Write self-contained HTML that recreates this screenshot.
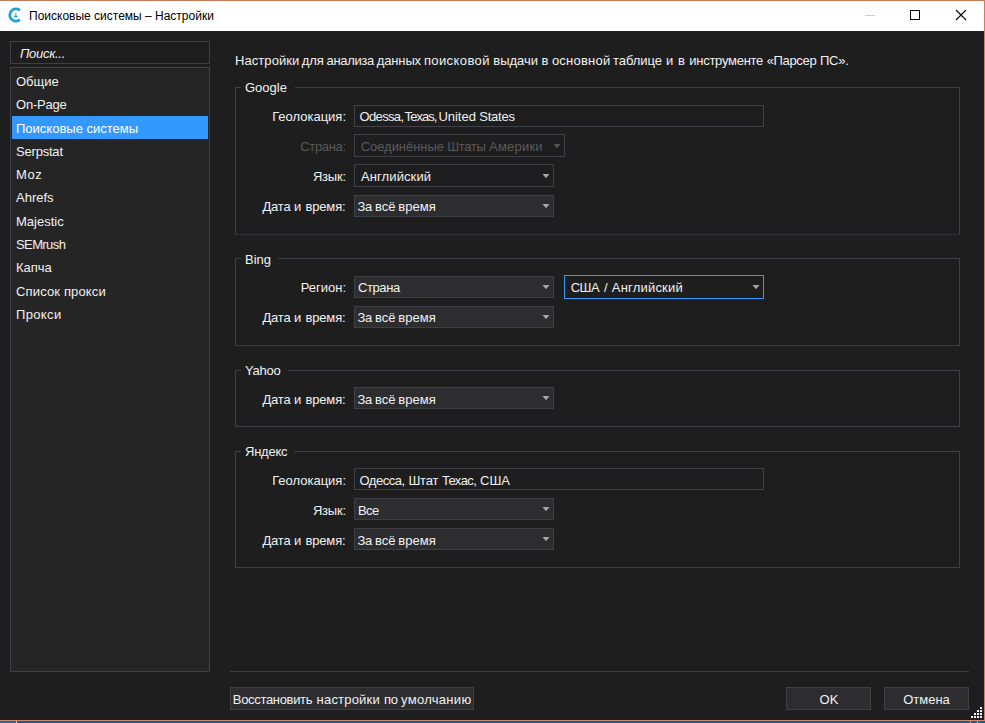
<!DOCTYPE html>
<html lang="ru">
<head>
<meta charset="utf-8">
<title>Поисковые системы – Настройки</title>
<style>
html,body{margin:0;padding:0;}
body{width:985px;height:723px;overflow:hidden;background:#1e1e1e;position:relative;
  font-family:"Liberation Sans",sans-serif;font-size:13px;color:#f1f1f1;}
.abs{position:absolute;}
.t{position:absolute;white-space:nowrap;line-height:16px;height:16px;}
.r{text-align:right;}
/* window chrome */
#topb{left:0;top:0;width:985px;height:1px;background:#c27a5a;}
#rightb{left:984px;top:0;width:1px;height:721px;background:#c98060;}
#botb{left:0;top:720px;width:985px;height:1px;background:#d28a6a;}
#blue{left:0;top:721px;width:985px;height:2px;background:#0063b1;}
#titlebar{left:0;top:1px;width:984px;height:30px;background:#ffffff;}
#title{left:29px;top:8px;font-size:12px;color:#000;}
/* sidebar */
.box{position:absolute;box-sizing:border-box;border:1px solid #3f3f46;}
#search{left:10px;top:41px;width:200px;height:23px;background:#1e1e1e;}
#list{left:10px;top:67px;width:200px;height:605px;background:#252526;}
.li{left:16px;}
#sel{left:12px;top:116px;width:196px;height:23px;background:#3399ff;}
/* groups */
.grp{position:absolute;box-sizing:border-box;border:1px solid #3f3f46;left:235px;width:725px;}
.gl{position:absolute;box-sizing:border-box;background:#1e1e1e;padding:0 0 0 4px;left:5px;top:-8px;line-height:16px;height:16px;white-space:nowrap;overflow:hidden;}
.lab{position:absolute;white-space:nowrap;line-height:16px;text-align:right;width:120px;left:226px;}
.dis{color:#5a5a5a;}
.inp{position:absolute;box-sizing:border-box;border:1px solid #3f3f46;background:#1e1e1e;height:22px;line-height:20px;padding-left:5px;padding-top:1px;white-space:nowrap;}
.cb{position:absolute;box-sizing:border-box;border:1px solid #3f3f46;background:#2d2d30;height:22px;line-height:20px;padding-left:3px;padding-top:1px;white-space:nowrap;}
.cbe{background:#1e1e1e;padding-left:6px;height:23px;line-height:22px;}
.p2{padding-top:2px;}
.arr{position:absolute;right:3px;top:8px;width:8px;height:5px;background:#a6a6a6;clip-path:polygon(0.5px 0,7.5px 0,4px 4.3px);}
.cbe .arr{top:9px;}
.btn{position:absolute;box-sizing:border-box;border:1px solid #3f3f46;background:#2d2d30;height:23px;line-height:21px;padding-top:1px;text-align:center;white-space:nowrap;font-size:13px;}
</style>
</head>
<body>
<!-- chrome -->
<div class="abs" id="titlebar"></div>
<div class="abs" id="topb"></div>
<div class="abs" id="rightb"></div>
<div class="abs" id="botb"></div>
<div class="abs" id="blue"></div>
<div class="abs" style="left:0;top:721px;width:16px;height:2px;background:#0a6fc4"></div>
<div class="abs" style="left:16px;top:721px;width:1px;height:2px;background:#c9c4d0"></div>
<div class="abs" style="left:970px;top:721px;width:1px;height:2px;background:#a9a4c0"></div>
<div class="abs" style="left:977px;top:721px;width:1px;height:2px;background:#a9b4c0"></div>
<svg class="abs" style="left:4px;top:3px" width="24" height="24" viewBox="4 3 24 24">
  <circle cx="15.9" cy="15" r="7.4" fill="none" stroke="#ececec" stroke-width="0.9"/>
  <circle cx="9.6" cy="21.5" r="0.9" fill="#fff" stroke="#e4e4e4" stroke-width="0.7"/>
  <path d="M19.85 10.35 A6.1 6.1 0 1 0 19.85 19.65" fill="none" stroke="#159fdc" stroke-width="2.7"/>
  <rect x="15.3" y="13.1" width="1.1" height="2.5" fill="#35abe0"/>
  <path d="M13.7 16.9 L14.6 15.6 L17.1 15.6 L18 16.9 Z" fill="#159fdc"/>
</svg>
<div class="t" id="title">Поисковые системы – Настройки</div>
<!-- window buttons -->
<div class="abs" style="left:865px;top:15px;width:10px;height:1px;background:#cccccc"></div>
<div class="abs" style="left:910px;top:10px;width:10px;height:10px;box-sizing:border-box;border:1px solid #000"></div>
<svg class="abs" style="left:955px;top:9px" width="12" height="12" viewBox="0 0 12 12"><path d="M1 1 L11 11 M11 1 L1 11" stroke="#000" stroke-width="1.1" fill="none"/></svg>

<!-- sidebar -->
<div class="box" id="search"></div>
<div class="t" style="left:20px;top:46px;font-style:italic;letter-spacing:-0.3px;">Поиск...</div>
<div class="box" id="list"></div>
<div class="abs" id="sel"></div>
<div class="t li" style="top:74px">Общие</div>
<div class="t li" style="top:97px;letter-spacing:-0.2px">On-Page</div>
<div class="t li" style="top:121px;color:#fff">Поисковые системы</div>
<div class="t li" style="top:144px;letter-spacing:-0.2px">Serpstat</div>
<div class="t li" style="top:167px;letter-spacing:0.6px">Moz</div>
<div class="t li" style="top:190px">Ahrefs</div>
<div class="t li" style="top:214px">Majestic</div>
<div class="t li" style="top:237px;letter-spacing:-0.6px">SEMrush</div>
<div class="t li" style="top:260px">Капча</div>
<div class="t li" style="top:284px;letter-spacing:0.15px">Список прокси</div>
<div class="t li" style="top:307px;letter-spacing:0.35px">Прокси</div>

<!-- heading -->
<div class="t" style="left:0;top:53px;width:900px"><span style="position:absolute;left:235.1px;letter-spacing:0.05px">Настройки </span><span style="position:absolute;left:301.8px;letter-spacing:-0.07px">для </span><span style="position:absolute;left:326.5px;letter-spacing:-0.33px">анализа </span><span style="position:absolute;left:376.8px;letter-spacing:-0.14px">данных </span><span style="position:absolute;left:423.9px;letter-spacing:0.4px">поисковой </span><span style="position:absolute;left:493.3px;letter-spacing:-0.04px">выдачи </span><span style="position:absolute;left:541.5px;letter-spacing:0px">в </span><span style="position:absolute;left:551.9px;letter-spacing:0.22px">основной </span><span style="position:absolute;left:613.1px;letter-spacing:-0.07px">таблице </span><span style="position:absolute;left:666.0px;letter-spacing:0px">и </span><span style="position:absolute;left:677.9px;letter-spacing:0px">в </span><span style="position:absolute;left:689.3px;letter-spacing:-0.27px">инструменте </span><span style="position:absolute;left:766.7px;letter-spacing:-0.34px">«Парсер </span><span style="position:absolute;left:820.0px;letter-spacing:-0.22px">ПС».</span></div>

<!-- Google -->
<div class="grp" style="top:87px;height:148px;border-bottom-color:#313137"><span class="gl" style="width:54px">Google</span></div>
<div class="lab" style="top:109px">Геолокация:</div>
<div class="inp" style="left:354px;top:105px;width:410px"><span style="position:absolute;left:4.6px;letter-spacing:-0.66px">Odessa,</span><span style="position:absolute;left:49.6px;letter-spacing:-0.96px">Texas,</span><span style="position:absolute;left:83.4px;letter-spacing:-0.01px">United </span><span style="position:absolute;left:124.3px;letter-spacing:-0.23px">States</span></div>
<div class="lab dis" style="top:139px"><span style="letter-spacing:-0.35px">Страна</span>:</div>
<div class="cb cbe dis" style="left:354px;top:134px;width:211px"><span style="position:absolute;left:5.7px;letter-spacing:-0.05px">Соединённые </span><span style="position:absolute;left:92.2px;letter-spacing:-0.35px">Штаты </span><span style="position:absolute;left:134.1px;letter-spacing:0.2px">Америки</span><i class="arr" style="background:#555"></i></div>
<div class="lab" style="top:169px"><span style="letter-spacing:-0.25px">Язык</span>:</div>
<div class="cb cbe" style="left:354px;top:164px;width:200px"><span style="letter-spacing:0.1px">Английский</span><i class="arr"></i></div>
<div class="lab" style="top:199px"><span style="position:absolute;left:36.5px;letter-spacing:-0.22px">Дата </span><span style="position:absolute;left:68.1px;letter-spacing:0px">и </span><span style="position:absolute;left:79.4px;letter-spacing:-0.14px">время:</span>&nbsp;</div>
<div class="cb" style="left:354px;top:195px;width:200px"><span style="position:absolute;left:2.6px;letter-spacing:-0.45px">За </span><span style="position:absolute;left:20.0px;letter-spacing:-0.03px">всё </span><span style="position:absolute;left:43.3px;letter-spacing:0.01px">время</span><i class="arr"></i></div>

<!-- Bing -->
<div class="grp" style="top:258px;height:88px;border-bottom-color:#3a3a40"><span class="gl" style="width:37px;top:-7px">Bing</span></div>
<div class="lab" style="top:280px">Регион:</div>
<div class="cb" style="left:354px;top:276px;width:200px"><span style="letter-spacing:-0.4px">Страна</span><i class="arr"></i></div>
<div class="cb cbe" style="left:564px;top:275px;width:200px;height:24px;border-color:#3399ff"><span style="position:absolute;left:5.7px;letter-spacing:-0.53px">США </span><span style="position:absolute;left:38.9px;letter-spacing:0px">/ </span><span style="position:absolute;left:46.8px;letter-spacing:0.2px">Английский</span><i class="arr"></i></div>
<div class="lab" style="top:310px"><span style="position:absolute;left:36.5px;letter-spacing:-0.22px">Дата </span><span style="position:absolute;left:68.1px;letter-spacing:0px">и </span><span style="position:absolute;left:79.4px;letter-spacing:-0.14px">время:</span>&nbsp;</div>
<div class="cb" style="left:354px;top:306px;width:200px"><span style="position:absolute;left:2.6px;letter-spacing:-0.45px">За </span><span style="position:absolute;left:20.0px;letter-spacing:-0.03px">всё </span><span style="position:absolute;left:43.3px;letter-spacing:0.01px">время</span><i class="arr"></i></div>

<!-- Yahoo -->
<div class="grp" style="top:370px;height:57px"><span class="gl" style="width:47px"><span style="letter-spacing:-0.25px">Yahoo</span></span></div>
<div class="lab" style="top:392px"><span style="position:absolute;left:36.5px;letter-spacing:-0.22px">Дата </span><span style="position:absolute;left:68.1px;letter-spacing:0px">и </span><span style="position:absolute;left:79.4px;letter-spacing:-0.14px">время:</span>&nbsp;</div>
<div class="cb p2" style="left:354px;top:387px;width:200px"><span style="position:absolute;left:2.6px;letter-spacing:-0.45px">За </span><span style="position:absolute;left:20.0px;letter-spacing:-0.03px">всё </span><span style="position:absolute;left:43.3px;letter-spacing:0.01px">время</span><i class="arr"></i></div>

<!-- Yandex -->
<div class="grp" style="top:451px;height:117px"><span class="gl" style="width:53px"><span style="letter-spacing:-0.25px">Яндекс</span></span></div>
<div class="lab" style="top:473px">Геолокация:</div>
<div class="inp p2" style="left:354px;top:468px;width:410px"><span style="position:absolute;left:4.5px;letter-spacing:-0.47px">Одесса, </span><span style="position:absolute;left:53.4px;letter-spacing:-0.21px">Штат </span><span style="position:absolute;left:86.9px;letter-spacing:-0.59px">Техас, </span><span style="position:absolute;left:125.0px;letter-spacing:0.01px">США</span></div>
<div class="lab" style="top:503px"><span style="letter-spacing:-0.25px">Язык</span>:</div>
<div class="cb p2" style="left:354px;top:498px;width:200px"><span style="letter-spacing:-0.6px">Все</span><i class="arr"></i></div>
<div class="lab" style="top:533px"><span style="position:absolute;left:36.5px;letter-spacing:-0.22px">Дата </span><span style="position:absolute;left:68.1px;letter-spacing:0px">и </span><span style="position:absolute;left:79.4px;letter-spacing:-0.14px">время:</span>&nbsp;</div>
<div class="cb p2" style="left:354px;top:528px;width:200px"><span style="position:absolute;left:2.6px;letter-spacing:-0.45px">За </span><span style="position:absolute;left:20.0px;letter-spacing:-0.03px">всё </span><span style="position:absolute;left:43.3px;letter-spacing:0.01px">время</span><i class="arr"></i></div>

<!-- bottom -->
<div class="abs" style="left:230px;top:671px;width:739px;height:1px;background:#3f3f46"></div>
<div class="btn" style="left:230px;top:687px;width:244px;text-align:left"><span style="position:absolute;left:1.8px;letter-spacing:-0.32px">Восстановить </span><span style="position:absolute;left:85.6px;letter-spacing:0.19px">настройки </span><span style="position:absolute;left:153.0px;letter-spacing:-0.39px">по </span><span style="position:absolute;left:170.1px;letter-spacing:0.29px">умолчанию</span></div>
<div class="btn" style="left:786px;top:687px;width:85px;text-indent:1px">OK</div>
<div class="btn" style="left:884px;top:687px;width:85px">Отмена</div>
<!-- grip -->
<svg class="abs" style="left:970px;top:706px" width="13" height="13" viewBox="0 0 13 13" shape-rendering="crispEdges">
  <g fill="#f4f4ff">
    <rect x="10" y="1" width="2" height="2"/>
    <rect x="7" y="4" width="2" height="2"/><rect x="10" y="4" width="2" height="2"/>
    <rect x="4" y="7" width="2" height="2"/><rect x="7" y="7" width="2" height="2"/><rect x="10" y="7" width="2" height="2"/>
    <rect x="1" y="10" width="2" height="2"/><rect x="4" y="10" width="2" height="2"/><rect x="7" y="10" width="2" height="2"/><rect x="10" y="10" width="2" height="2"/>
  </g>
</svg>
</body>
</html>
